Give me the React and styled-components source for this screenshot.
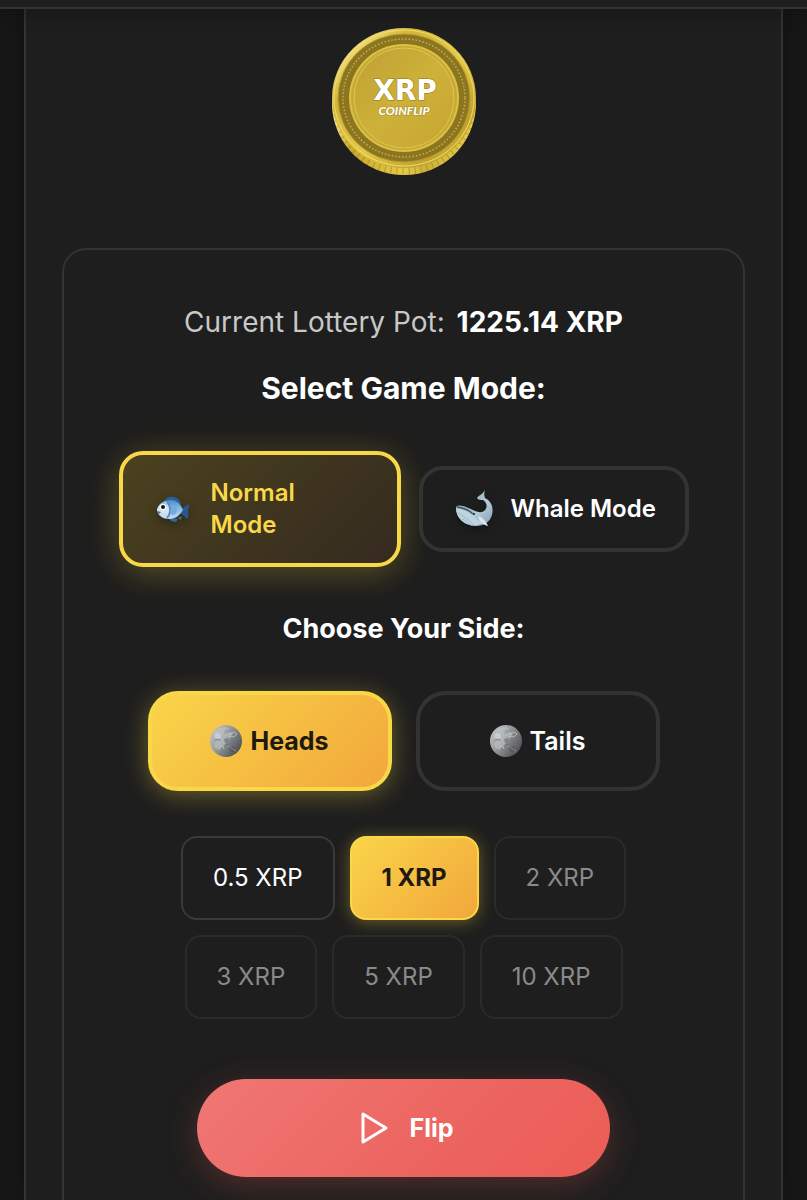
import React, { useState } from "react";
import styled, { createGlobalStyle, css } from "styled-components";

const GlobalStyle = createGlobalStyle`
  *, *::before, *::after { box-sizing: border-box; }
  body {
    margin: 0;
    background: #171717;
    color: #ffffff;
    font-family: Inter, "Liberation Sans", sans-serif;
  }
  button { font-family: inherit; cursor: pointer; }
`;

const Page = styled.div`
  display: flex;
  flex-direction: column;
  min-height: 100vh;
`;

const TopBar = styled.header`
  position: relative;
  height: 9px;
  background: #1e1e1e;
  border-bottom: 2px solid #333333;
  box-shadow: 0 4px 16px rgba(0, 0, 0, 0.3);
`;

const Frame = styled.main`
  flex: 1;
  display: flex;
  flex-direction: column;
  align-items: center;
  gap: 73px;
  margin: 0 24px;
  padding: 18px 36px 0;
  background: #1e1e1e;
  border: solid #333333;
  border-width: 0 2px;
  box-shadow: 0 0 24px rgba(0, 0, 0, 0.3);
`;

const CoinArt = styled.svg`
  display: block;
  width: 148px;
  height: 148px;
`;

const Card = styled.section`
  flex: 1;
  align-self: stretch;
  display: flex;
  flex-direction: column;
  align-items: center;
  padding: 54px 24px 24px;
  border: 2px solid #333333;
  border-bottom: 0;
  border-radius: 24px 24px 0 0;
`;

const Pot = styled.p`
  margin: 0;
  font-size: 28px;
  line-height: 36px;
  color: #c8c8c8;
  strong { margin-left: 4px; font-weight: 700; color: #ffffff; }
`;

const Title = styled.h2`
  margin: 30px 0 45px;
  font-size: 30px;
  line-height: 36px;
  font-weight: 700;
`;

const Subtitle = styled.h3`
  margin: 44px 0;
  font-size: 27px;
  line-height: 36px;
  font-weight: 700;
`;

const Row = styled.div`
  display: flex;
  flex-wrap: wrap;
  align-items: center;
  justify-content: center;
  gap: ${(p) => p.$gap}px;
`;

const ModeButton = styled.button`
  display: flex;
  align-items: center;
  gap: 16px;
  width: ${(p) => (p.$active ? 282 : 270)}px;
  min-height: ${(p) => (p.$active ? 116 : 86)}px;
  padding: 0 24px 0 32px;
  border: 4px solid #333333;
  border-radius: 24px;
  background: #1e1e1e;
  color: #ffffff;
  font-size: 24px;
  line-height: 32px;
  font-weight: 600;
  text-align: left;
  ${(p) => p.$active && css`
    border-color: #f9d848;
    background: linear-gradient(135deg, #4a421f, #352a1f);
    color: #f9d848;
    box-shadow: 0 8px 32px rgba(255, 217, 61, 0.2), 0 0 40px rgba(255, 217, 61, 0.08);
  `}
`;

const ModeLabel = styled.span`
  max-width: ${(p) => (p.$narrow ? 120 : 160)}px;
`;

const ModeIcon = styled.svg`
  flex: none;
  width: 40px;
  height: 40px;
  filter: drop-shadow(0 4px 4px rgba(0, 0, 0, 0.3));
`;

const SideButton = styled.button`
  display: flex;
  align-items: center;
  justify-content: center;
  gap: 8px;
  width: 244px;
  height: 100px;
  border: 4px solid #333333;
  border-radius: 30px;
  background: #1e1e1e;
  color: #ffffff;
  font-size: 25px;
  line-height: 32px;
  font-weight: 600;
  ${(p) => p.$active && css`
    border-color: #f9d848;
    background: linear-gradient(135deg, #f9d649, #f2a63b) border-box;
    color: #1e1a10;
    font-weight: 700;
    box-shadow: 0 4px 24px rgba(255, 217, 61, 0.35);
  `}
`;

const MoonIcon = styled.svg`
  width: 32px;
  height: 32px;
`;

const Bets = styled(Row)`
  width: 450px;
  max-width: 100%;
  margin: 45px 0 60px;
`;

const BetButton = styled.button`
  height: 84px;
  padding: 0 30px;
  border: 2px solid #3a3a3a;
  border-radius: 16px;
  background: #1e1e1e;
  color: #ffffff;
  font-size: 24px;
  line-height: 32px;
  font-weight: 400;
  white-space: nowrap;
  &:disabled { border-color: #2a2a2a; color: #8a8a8a; cursor: default; }
  ${(p) => p.$active && css`
    border-color: #f9d848;
    background: linear-gradient(135deg, #f9d649, #f2a63b) border-box;
    color: #1e1a10;
    font-weight: 700;
    box-shadow: 0 2px 16px rgba(255, 217, 61, 0.35);
  `}
`;

const FlipButton = styled.button`
  display: flex;
  align-items: center;
  justify-content: center;
  gap: 16px;
  width: 413px;
  max-width: 100%;
  height: 98px;
  border: 0;
  border-radius: 49px;
  background: linear-gradient(135deg, #f07775, #ec625c 70%, #ec5e58);
  color: #ffffff;
  font-size: 25px;
  line-height: 32px;
  font-weight: 700;
  box-shadow: 0 8px 32px rgba(238, 90, 82, 0.25);
  svg { width: 40px; height: 40px; }
`;

function Coin() {
  return (
    <CoinArt viewBox="0 0 148 148" role="img" aria-label="XRP Coinflip coin">
      <defs>
        <linearGradient id="coinRim" x1="0" y1="0" x2="1" y2="1">
          <stop offset="0" stopColor="#c5a92d" />
          <stop offset="0.15" stopColor="#eedb76" />
          <stop offset="0.28" stopColor="#d2b534" />
          <stop offset="0.55" stopColor="#e3c946" />
          <stop offset="0.8" stopColor="#c0a12b" />
          <stop offset="1" stopColor="#e3ca49" />
        </linearGradient>
        <linearGradient id="coinEdge">
          <stop offset="0" stopColor="#fff0a0" />
          <stop offset="0.12" stopColor="#c6a82b" />
          <stop offset="0.5" stopColor="#e6cb48" />
          <stop offset="0.65" stopColor="#cdb036" />
          <stop offset="1" stopColor="#e9d04c" />
        </linearGradient>
        <linearGradient id="coinFace" x1="0" y1="0" x2="1" y2="1">
          <stop offset="0" stopColor="#bda033" />
          <stop offset="0.5" stopColor="#ceb139" />
          <stop offset="1" stopColor="#c5a532" />
        </linearGradient>
        <clipPath id="coinEdgeClip">
          <path d="M2 72v7c2 39 33 69 72 69s70-30 72-69v-7z" />
        </clipPath>
      </defs>
      <path d="M2 72v7c2 39 33 69 72 69s70-30 72-69v-7z" fill="url(#coinEdge)" />
      <path d="M3 88c9 33 36 56 71 56s62-23 71-56" fill="none" stroke="#92781f" strokeWidth="7" strokeDasharray="1 5" opacity="0.55" clipPath="url(#coinEdgeClip)" />
      <ellipse cx="74" cy="71" rx="72" ry="70" fill="url(#coinRim)" />
      <ellipse cx="74" cy="71" rx="70" ry="68" fill="none" stroke="#f1dd71" strokeWidth="1" />
      <ellipse cx="74" cy="71" rx="66" ry="64" fill="#8c7520" stroke="#b89b2f" strokeWidth="1" />
      <ellipse cx="74" cy="71" rx="61" ry="59" fill="none" stroke="#c7b04a" strokeWidth="1.5" strokeDasharray="1.5 2" />
      <ellipse cx="74" cy="71" rx="55" ry="54" fill="#dbc141" />
      <ellipse cx="74" cy="71" rx="53" ry="52" fill="#c7aa36" />
      <ellipse cx="74" cy="71" rx="50" ry="50" fill="url(#coinFace)" stroke="#e0c650" strokeWidth="1" />
      <text x="75" y="73" textAnchor="middle" fontFamily="DejaVu Sans, sans-serif" fontWeight="700" fontSize="28" fill="#fff" stroke="#8f7620" strokeWidth="1" paintOrder="stroke">XRP</text>
      <text x="74" y="88" textAnchor="middle" fontFamily="Lato, sans-serif" fontWeight="900" fontStyle="italic" fontSize="12" fill="#fff" stroke="#a38a2a" strokeWidth="1" paintOrder="stroke">COINFLIP</text>
    </CoinArt>
  );
}

function Fish() {
  return (
    <ModeIcon viewBox="0 0 40 40" aria-hidden="true">
      <defs>
        <linearGradient id="fishBody" x1="0" y1="0" x2="0" y2="1">
          <stop offset="0" stopColor="#4d88c4" />
          <stop offset="0.45" stopColor="#86b9e6" />
          <stop offset="1" stopColor="#bfdaf0" />
        </linearGradient>
        <linearGradient id="fishHead" x1="0" y1="0" x2="0" y2="1">
          <stop offset="0" stopColor="#86b4dd" />
          <stop offset="0.4" stopColor="#dbe8f3" />
          <stop offset="1" stopColor="#c3d9ec" />
        </linearGradient>
      </defs>
      <path d="M9 12c3-5 11-6 15-1 2 2 2 4 2 5l-14-1z" fill="#2c5f99" />
      <path d="M26 20c3-1 5-5 8-4 1 1-1 4-1 6s1 5 0 7c-3 1-5-4-8-5z" fill="#2a5592" />
      <path d="M13 28l3 4 5 1 2-3zM22 29l4 2 1-4z" fill="#3a6595" />
      <path d="M2 21c1-6 7-10 14-10 6 0 10 5 12 10-3 5-7 9-14 9C8 30 3 27 2 21z" fill="url(#fishBody)" />
      <path d="M2 21c1-5 5-8 9-9 4 4 4 13 0 17-5-1-8-4-9-8z" fill="url(#fishHead)" />
      <path d="M12 13c4 4 4 12 0 16" fill="none" stroke="#4f8ac0" strokeWidth="1.5" />
      <path d="M16 19c5-3 8 1 5 5-1 2-4 2-6 1z" fill="#74abdd" />
      <circle cx="8" cy="18" r="3" fill="#fff" />
      <circle cx="8" cy="18" r="2" fill="#101318" />
      <path d="M2 22l4 1-2 2z" fill="#4a6488" />
    </ModeIcon>
  );
}

function Whale() {
  return (
    <ModeIcon viewBox="0 0 40 40" aria-hidden="true">
      <defs>
        <linearGradient id="whaleBody" x1="0" y1="0" x2="1" y2="1">
          <stop offset="0" stopColor="#7f9bab" />
          <stop offset="0.6" stopColor="#b4cbd8" />
          <stop offset="1" stopColor="#7f9dae" />
        </linearGradient>
      </defs>
      <path d="M30 1c-1 3-1 5 0 8 6 3 9 9 7 17-2 7-8 11-16 11C9 37 1 29 1 19c0-3 3-3 7-2 7 2 14 7 19 6 6-2 6-9 1-12-2 0-5 0-6-2 2-3 6-4 8-8z" fill="url(#whaleBody)" />
      <path d="M1 19c7 1 15 5 18 9 3 3 6 4 8 6-9 6-26-1-26-15z" fill="#bdd5e1" />
      <path d="M2 18c7 1 13 4 16 7" fill="none" stroke="#3c5361" strokeWidth="1.5" />
      <path d="M3 24c5 3 10 5 15 12M7 30c3 1 6 3 8 6" fill="none" stroke="#9bb8c6" strokeWidth="1" />
      <path d="M23 27c4 1 8 5 10 10-5-1-9-4-10-10z" fill="#d7e6ec" />
      <circle cx="19" cy="25" r="1" fill="#17242c" />
    </ModeIcon>
  );
}

function Moon({ id }) {
  return (
    <MoonIcon viewBox="0 0 32 32" aria-hidden="true">
      <defs>
        <linearGradient id={id} x1="0" y1="0.1" x2="1" y2="0.8">
          <stop offset="0" stopColor="#c8cacb" />
          <stop offset="0.45" stopColor="#95989a" />
          <stop offset="1" stopColor="#48494c" />
        </linearGradient>
      </defs>
      <circle cx="16" cy="16" r="16" fill={`url(#${id})`} />
      <path d="M4 8l5-5 7-1 4 2-5 1-1 4 6-2 3 2-3 3-4 1-2 3 2 3-4 2-2 4-5-2-1-5 4-2-4-2z" fill="#c5c8ca" opacity="0.55" />
      <path d="M19 9l3-1 2-1 3 2-3 3-4-1-1 3M10 22l3-1 1 3M18 21l8 5" fill="none" stroke="#d4d7d9" strokeWidth="1" opacity="0.6" />
      <path d="M5 15l4-1 1 2M14 14l3 1-1 3M15 20l3-1 2 3-3 2" fill="none" stroke="#707376" strokeWidth="1" opacity="0.8" />
      <circle cx="8" cy="11" r="3" fill="#dadddf" opacity="0.5" />
      <circle cx="22" cy="24" r="3" fill="#4b4d50" opacity="0.4" />
    </MoonIcon>
  );
}

const BETS = [
  { label: "0.5 XRP" },
  { label: "1 XRP" },
  { label: "2 XRP", disabled: true },
  { label: "3 XRP", disabled: true },
  { label: "5 XRP", disabled: true },
  { label: "10 XRP", disabled: true },
];

export default function App() {
  const [mode, setMode] = useState("normal");
  const [side, setSide] = useState("heads");
  const [bet, setBet] = useState("1 XRP");

  return (
    <>
      <GlobalStyle />
      <Page>
        <TopBar />
        <Frame>
          <Coin />
          <Card>
            <Pot>Current Lottery Pot: <strong>1225.14 XRP</strong></Pot>
            <Title>Select Game Mode:</Title>
            <Row $gap={18}>
              <ModeButton type="button" $active={mode === "normal"} aria-pressed={mode === "normal"} onClick={() => setMode("normal")}>
                <Fish />
                <ModeLabel $narrow={mode === "normal"}>Normal Mode</ModeLabel>
              </ModeButton>
              <ModeButton type="button" $active={mode === "whale"} aria-pressed={mode === "whale"} onClick={() => setMode("whale")}>
                <Whale />
                <ModeLabel $narrow={mode === "whale"}>Whale Mode</ModeLabel>
              </ModeButton>
            </Row>
            <Subtitle>Choose Your Side:</Subtitle>
            <Row $gap={24}>
              <SideButton type="button" $active={side === "heads"} aria-pressed={side === "heads"} onClick={() => setSide("heads")}>
                <Moon id="headsMoon" />
                Heads
              </SideButton>
              <SideButton type="button" $active={side === "tails"} aria-pressed={side === "tails"} onClick={() => setSide("tails")}>
                <Moon id="tailsMoon" />
                Tails
              </SideButton>
            </Row>
            <Bets $gap={15}>
              {BETS.map(({ label, disabled }) => (
                <BetButton key={label} type="button" disabled={disabled} $active={bet === label} aria-pressed={bet === label} onClick={() => setBet(label)}>
                  {label}
                </BetButton>
              ))}
            </Bets>
            <FlipButton type="button">
              <svg viewBox="0 0 40 40" fill="none" stroke="currentColor" strokeWidth="3" strokeLinejoin="round" aria-hidden="true">
                <path d="M9 6v28l23-14z" />
              </svg>
              Flip
            </FlipButton>
          </Card>
        </Frame>
      </Page>
    </>
  );
}
